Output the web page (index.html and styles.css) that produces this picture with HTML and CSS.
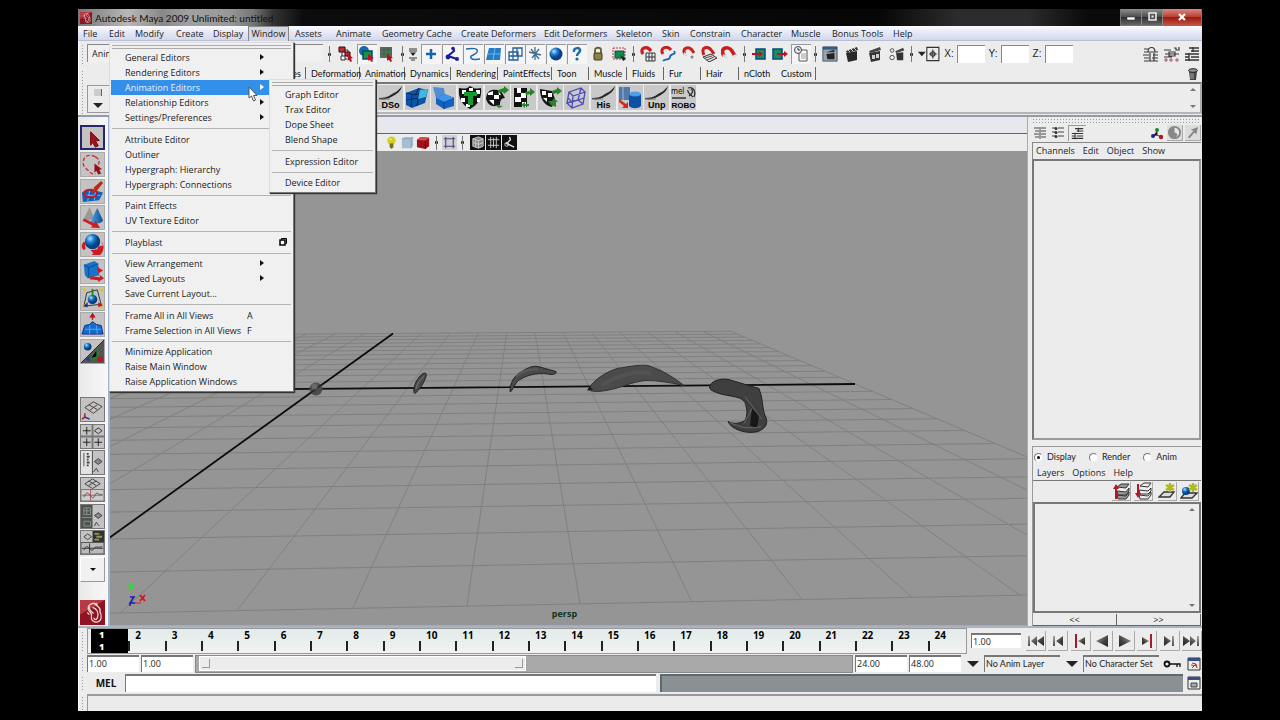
FILE: index.html
```html
<!DOCTYPE html>
<html lang="en">
<head>
<meta charset="utf-8">
<title>Autodesk Maya 2009 Unlimited: untitled</title>
<link rel="stylesheet" href="styles.css">
</head>
<body>
<svg class="defs" aria-hidden="true">
  <defs>
    <linearGradient id="metal" x1="0" y1="0" x2="1" y2="1"><stop offset="0" stop-color="#aaa"/><stop offset=".6" stop-color="#444"/><stop offset="1" stop-color="#222"/></linearGradient>
    <radialGradient id="ball" cx=".35" cy=".3"><stop offset="0" stop-color="#b5e2ff"/><stop offset=".5" stop-color="#1c7fd6"/><stop offset="1" stop-color="#073f80"/></radialGradient>
    <linearGradient id="cone" x1="0" y1="0" x2="1" y2="0"><stop offset="0" stop-color="#4da3e8"/><stop offset="1" stop-color="#0b4a92"/></linearGradient>
  </defs>
  <symbol id="hier" viewBox="0 0 16 16"><path d="M4 5v8h5M7 4h3v7" fill="none" stroke="#333"/><path d="M1 1h6v5H1zM7 6h5v4H7z" fill="#b9303a" stroke="#401"/><path d="M3 10h4v4H3z" fill="#fff" stroke="#333"/><path d="M10 8l5 4-2 .5 1 3-2 .3-1-2-1.500 1z" fill="#b01020"/></symbol>
  <symbol id="obj" viewBox="0 0 16 16"><circle cx="5" cy="5" r="5" fill="#1668a8"/><path d="M4 5h9v8H4z" fill="#159447" stroke="#044a70" stroke-width="1.500"/><path d="M9 8l6 4-2 .5 1 3-2 .3-1-2-2 1z" fill="#c01020"/></symbol>
  <symbol id="comp" viewBox="0 0 16 16"><path d="M1 1h12v11H1z" fill="#666"/><path d="M1 4h12M1 8h12M5 1v11M9 1v11" stroke="#24703c"/><path d="M8 8l6 4-2 .5 1 3-2 .3-1-2-2 1z" fill="#b01020"/></symbol>
  <symbol id="mask" viewBox="0 0 10 16"><path d="M1 3h8M1 5h8M1 12h8M3 14h4" stroke="#333"/><path d="M2 6.500h6L5 10z" fill="#222"/></symbol>
  <symbol id="plus" viewBox="0 0 16 16"><path d="M8 3v10M3 8h10" stroke="#1464a8" stroke-width="2.500"/></symbol>
  <symbol id="joint" viewBox="0 0 16 16"><path d="M9 2l1 3-6 5 9 3" fill="none" stroke="#1d1d9c" stroke-width="2.200"/><circle cx="9" cy="2.500" r="1.800" fill="#1d1d9c"/><circle cx="4" cy="11" r="2.400" fill="#1d1d9c"/><circle cx="13" cy="13" r="2" fill="#1d1d9c"/></symbol>
  <symbol id="curve" viewBox="0 0 16 16"><path d="M1 3c6-1 13-1 11 3S4 9 6 12s6 1 9 1" fill="none" stroke="#2269a8" stroke-width="1.500"/></symbol>
  <symbol id="plane" viewBox="0 0 16 16"><path d="M3 2h12l-1 12H0z" fill="#237cc4"/><path d="M9 2L7 14M2 8h12" stroke="#70b8ef"/></symbol>
  <symbol id="latt" viewBox="0 0 16 16"><path d="M2 6h9v8H2zM6 2h9v8H6zM2 10h9M6 6v8M10 2v8" fill="none" stroke="#245f99" stroke-width="1.300"/></symbol>
  <symbol id="burst" viewBox="0 0 16 16"><path d="M2 6l12 3M8 1v13M4 3l8 10M12 3L5 12" stroke="#456d92" stroke-width="1.300"/></symbol>
  <symbol id="ballic" viewBox="0 0 16 16"><circle cx="8" cy="8" r="6.500" fill="url(#ball)"/></symbol>
  <symbol id="ques" viewBox="0 0 16 16"><path d="M5 6c-1-5 7-5 6-1-.5 2-3 2-3 5" fill="none" stroke="#1b6ba6" stroke-width="2.500"/><circle cx="8" cy="13" r="1.600" fill="#1b6ba6"/></symbol>
  <symbol id="lock" viewBox="0 0 16 16"><path d="M5 8V4c0-3 6-3 6 0v4" fill="none" stroke="#665f30" stroke-width="1.800"/><rect x="4" y="7" width="8" height="7" rx="1" fill="#8c8142" stroke="#3c3818"/></symbol>
  <symbol id="hili" viewBox="0 0 16 16"><path d="M2 2h12v11H2z" fill="none" stroke="#c33" stroke-dasharray="2 1"/><path d="M4 5h9v7H4z" fill="#178b45" stroke="#055"/><path d="M9 9l6 4-3 2z" fill="#222"/></symbol>
  <symbol id="magnet" viewBox="0 0 16 16"><path d="M3 10C-2 2 7-1 11 5l3 5" fill="none" stroke="#c62020" stroke-width="3.600"/><path d="M2 9l4 3M12 11l3-2" stroke="#ddd" stroke-width="2.400"/></symbol>
  <symbol id="maggrid" viewBox="0 0 16 16"><path d="M3 8C-1 2 7-1 11 5" fill="none" stroke="#c62020" stroke-width="3.200"/><path d="M6 7h9v8H6zM6 11h9M9 7v8M12 7v8" fill="#eee" stroke="#333"/></symbol>
  <symbol id="magcurve" viewBox="0 0 16 16"><path d="M3 8C-1 2 7-1 11 4" fill="none" stroke="#c62020" stroke-width="3"/><path d="M14 5c3 4-4 2-4 6s-5 1-7 4" fill="none" stroke="#1766ad" stroke-width="1.800"/></symbol>
  <symbol id="magpt" viewBox="0 0 16 16"><path d="M4 8C0 2 8 0 11 4l2 3" fill="none" stroke="#c62020" stroke-width="3"/><path d="M3 7l3 3" stroke="#ddd" stroke-width="2"/><circle cx="11" cy="11" r="1.500" fill="#789"/></symbol>
  <symbol id="magview" viewBox="0 0 16 16"><path d="M2 11l8-3 6 4-8 4z" fill="#ddd" stroke="#333"/><path d="M4 12l7-2M6 14l7-3" stroke="#555"/><path d="M3 9C-1 1 7-1 11 5l2 3" fill="none" stroke="#c62020" stroke-width="3"/></symbol>
  <symbol id="inc" viewBox="0 0 16 16"><path d="M5 3h9v10H5z" fill="#1b8d5c" stroke="#054a80" stroke-width="1.500"/><path d="M1 8h8" stroke="#c01020" stroke-width="2"/><path d="M8 5l4 3-4 3z" fill="#c01020"/></symbol>
  <symbol id="outc" viewBox="0 0 16 16"><path d="M1 3h9v10H1z" fill="#1b8d5c" stroke="#054a80" stroke-width="1.500"/><path d="M5 8h8" stroke="#c01020" stroke-width="2"/><path d="M12 5l4 3-4 3z" fill="#c01020"/></symbol>
  <symbol id="hist" viewBox="0 0 16 16"><path d="M6 4h8v11H6z" fill="#fff" stroke="#555"/><path d="M8 8h5M8 10h5M8 12h5" stroke="#999"/><circle cx="5" cy="4" r="3.500" fill="#eee" stroke="#345"/><path d="M5 2v2h2" fill="none" stroke="#234"/></symbol>
  <symbol id="clap" viewBox="0 0 16 16"><path d="M2 7l11-2v9l-9 2z" fill="#292929"/><path d="M2 5l11-4 1 3-11 3z" fill="#333"/><path d="M4 4l2 2M7 3l2 2M10 2l2 2" stroke="#ccc"/></symbol>
  <symbol id="clapwin" viewBox="0 0 18 18"><path d="M1 1h16v16H1z" fill="#9aa3ab" stroke="#39536e"/><path d="M1 1h16v3H1z" fill="#345a86"/><path d="M5 9l9-1v7H6z" fill="#222"/><path d="M5 7l9-3v3z" fill="#333"/></symbol>
  <symbol id="clapipr" viewBox="0 0 16 16"><path d="M2 7l11-2v9l-9 2z" fill="#333"/><path d="M2 5l11-4 1 3-11 3z" fill="#444"/><path d="M5 9h3v4H5zM9 8h3v4H9z" fill="#ccc"/></symbol>
  <symbol id="clapset" viewBox="0 0 18 16"><path d="M8 7l8-1v9H9z" fill="#333"/><path d="M7 5l9-4 1 3-9 3z" fill="#444"/><circle cx="3.500" cy="4" r="2" fill="#eee" stroke="#444"/><circle cx="3.500" cy="12" r="2.500" fill="#eee" stroke="#444"/></symbol>
  <symbol id="inpt" viewBox="0 0 20 16"><path d="M0 6h7l-3.500 4z" fill="#222"/><path d="M8 2h11v12H8zM13.500 4v8M10 8h7" fill="none" stroke="#333"/><circle cx="13.500" cy="8" r="2" fill="none" stroke="#333"/></symbol>
  <symbol id="cb1" viewBox="0 0 16 16"><path d="M1 3h5M1 6h14M0 9h6M10 9h5M1 12h5M9 12h6M1 15h14M5 6c0-6 7-6 7 0M7 7v8h4V7" fill="none" stroke="#383838" stroke-width="1.200"/></symbol>
  <symbol id="cb2" viewBox="0 0 16 16"><path d="M0 4h7M10 2h2v2h3V1M1 8h14M5 6h6v4H5zM0 11h8" fill="none" stroke="#383838" stroke-width="1.200"/><path d="M1 13h2v2H1zM6 13h2v2H6zM12 13h2v2h-2z" fill="none" stroke="#a56"/></symbol>
  <symbol id="cb3" viewBox="0 0 16 16"><path d="M5 2h10M7 5h8M1 8h14M1 11h4M7 11h8M1 14h14M9 1v5M5 7v8" fill="none" stroke="#333" stroke-width="1.300"/></symbol>
  <symbol id="cha" viewBox="0 0 14 14"><path d="M1 2h5M8 2h5M2 5h4M8 5h5M1 8h5M8 8h5M2 11h4M8 11h5M7 1v12" stroke="#444"/></symbol>
  <symbol id="chb" viewBox="0 0 14 14"><path d="M1 2h4M7 2h6M1 6h4M7 6h6M1 10h4M7 10h6" stroke="#444"/><circle cx="5" cy="2.500" r="1.500" fill="#333"/><circle cx="5" cy="6.500" r="1.500" fill="#333"/><circle cx="5" cy="10.500" r="1.500" fill="#333"/></symbol>
  <symbol id="trash" viewBox="0 0 14 14"><path d="M3 4h8l-1 9H4z" fill="#444"/><ellipse cx="7" cy="3.500" rx="4.500" ry="1.800" fill="#999" stroke="#222"/><path d="M5 6v6M7 6v6" stroke="#aaa"/></symbol>
  <symbol id="rgb" viewBox="0 0 14 14"><path d="M7 5v4l-4 1M7 9l4 2" stroke="#333"/><circle cx="7" cy="4" r="2" fill="#168b28"/><circle cx="3" cy="10" r="2" fill="#15219b"/><circle cx="11" cy="11" r="2.200" fill="#ba1022"/></symbol>
  <symbol id="half" viewBox="0 0 16 16"><circle cx="8" cy="8" r="6" fill="#e6e6e6" stroke="#888" stroke-width="2"/><path d="M8 2a6 6 0 0 0 0 12c4-3 4-5 0-6z" fill="#888"/></symbol>
  <symbol id="arrne" viewBox="0 0 16 16"><path d="M3 13l6-7-3-1 8-3-2 8-2-2-5 6z" fill="#888"/></symbol>
  <symbol id="arrow" viewBox="0 0 24 24"><path d="M9 5l9 9-4 .5 3 5-3 1.500-3-5-2 3z" fill="#9c1420" stroke="#700"/></symbol>
  <symbol id="lasso" viewBox="0 0 24 24"><path d="M15 4c-12-6-16 7-10 12s5 6 10 6M15 4c5 3 4 5 3 9" fill="none" stroke="#c23b4a" stroke-width="1.500" stroke-dasharray="4 2"/><path d="M14 11l8 6-3 .5 2 4-3 1-2-4-2 2z" fill="#92101c"/></symbol>
  <symbol id="paint" viewBox="0 0 24 24"><path d="M1 13l9-3 13 3-4 8-17 2z" fill="#135fbb"/><path d="M3 16h17M9 11l-2 11M15 12l-1 9" stroke="#6cb8ff"/><ellipse cx="10" cy="14" rx="7" ry="4" fill="none" stroke="#c01824" stroke-width="2"/><path d="M10 14l2-5 4 3zM13 8l8-7 2 2-7 9z" fill="#b72e16"/></symbol>
  <symbol id="move" viewBox="0 0 24 24"><path d="M1 17L9 1l5 12z" fill="#999"/><path d="M10 16L17 2l6 13c-2 4-10 4-13 1z" fill="url(#cone)"/><path d="M3 13l11 5 1-3 5 8-10-.5 2-2-10-5z" fill="#ce1d22"/></symbol>
  <symbol id="rotate" viewBox="0 0 24 24"><circle cx="12" cy="9" r="8" fill="url(#ball)"/><path d="M3 9c-3 3-3 6 0 9l2-2c-1-2-1-4 1-5zM10 18l7-1 1-3 5-1c-1-2-1-4-2-5 4 5 3 11-1 15H11l2-2z" fill="#cc1b25"/></symbol>
  <symbol id="scale" viewBox="0 0 24 24"><path d="M3 5l11-4 4 3 1 12-12 3-3-3z" fill="#1574c9"/><path d="M3 5l5 3 10-4M8 8v11" fill="none" stroke="#0b4c91"/><path d="M17 7l6 4-5 3zM10 17l10 1-1-3 5 4-6 4v-2l-9-1z" fill="#cc1b25"/></symbol>
  <symbol id="univ" viewBox="0 0 24 24"><path d="M3 20L6 6l11-3 4 15z" fill="none" stroke="#333"/><path d="M2 2l3 2M20 2l3 2M2 21l3-2M20 21l3-1" stroke="#dbc923" stroke-width="3"/><circle cx="12" cy="13" r="5" fill="url(#ball)"/><path d="M12 2v8" stroke="#198a2d" stroke-width="2"/><path d="M18 16l5 3-5 2z" fill="#c01824"/><path d="M7 16l-5 4 5 1z" fill="#1c2aa0"/></symbol>
  <symbol id="soft" viewBox="0 0 24 24"><path d="M1 22l3-9 5-1 3-3 4 3 5 1 2 9z" fill="#146ccb" stroke="#0b2e93"/><path d="M4 17h17M9 13v9M16 13l1 9" stroke="#54a9f6"/><path d="M12 7V3M10 4l2-3 2 3z" stroke="#b01822" fill="#b01822" stroke-width="1.500"/></symbol>
  <symbol id="manip" viewBox="0 0 24 24"><path d="M0 24L24 0v24z" fill="#555"/><circle cx="7" cy="7" r="4" fill="url(#ball)"/><path d="M0 24L24 0" stroke="#222"/><path d="M17 10v8l-7 2M17 18l5 2" stroke="#198a2d" stroke-width="2"/><circle cx="20" cy="20" r="3" fill="#b01822"/><path d="M9 17v6l-4-3z" fill="#1b37aa"/></symbol>
  <symbol id="persp" viewBox="0 0 24 24"><path d="M4 10l9-6 9 5-9 7zM8 7l9 5M17 7l-8 6" fill="#c6c3be" stroke="#444"/><path d="M4 16v4l-3 2" stroke="#a22" fill="none" stroke-width="1.500"/><path d="M4 20l5 2" stroke="#22a" stroke-width="1.500"/></symbol>
  <symbol id="four" viewBox="0 0 24 24"><path d="M12 0v24M0 12h24" stroke="#777" stroke-width="2"/><path d="M2 6h8M6 2v8M2 18h8M6 14v8M14 18h8M18 14v8" stroke="#222"/><path d="M14 6l4-3 4 3-4 3z" fill="none" stroke="#333"/></symbol>
  <symbol id="outl" viewBox="0 0 24 24"><path d="M0 0h11v24H0z" fill="#e3e3e3"/><path d="M3 2v14" stroke="#555"/><path d="M6 3h2M6 6h3M6 9h2M6 12h3M6 15h2" stroke="#444" stroke-width="2"/><path d="M12 0v24" stroke="#555"/><path d="M14 11l4-3 4 3-4 3z" fill="#888" stroke="#444"/><path d="M13 22l3-4 2 4" stroke="#444" fill="none"/></symbol>
  <symbol id="pgraph" viewBox="0 0 24 24"><path d="M4 6l8-5 8 5-8 5zM8 3l8 5M16 3L8 8" fill="none" stroke="#444"/><path d="M0 12h24v12H0z" fill="#ccc" stroke="#777"/><path d="M1 18h22M10 12v12" stroke="#b55"/><path d="M3 20c5-12 8 6 11-1s4 0 8-2" fill="none" stroke="#456"/></symbol>
  <symbol id="hyper" viewBox="0 0 24 24"><path d="M0 0h12v24H0z" fill="#4c5450"/><path d="M3 3h7v7H3zM3 6h7M6 3v7M1 13h10M3 17h7v5H3z" fill="none" stroke="#899489"/><path d="M14 11l4-3 4 3-4 3z" fill="#888" stroke="#444"/><path d="M14 22l2-4 3 4" stroke="#444" fill="none"/></symbol>
  <symbol id="phg" viewBox="0 0 24 24"><path d="M12 0h12v12H12z" fill="#333"/><path d="M14 3h5M16 6h6M14 9h5" stroke="#9a9452" stroke-width="2"/><path d="M3 6l4-3 4 3-4 3z" fill="none" stroke="#444"/><path d="M0 12h24v12H0z" fill="#bbb" stroke="#555"/><path d="M1 18h22M3 20c4-10 7 4 10-1s5 0 9-3M9 13v10" fill="none" stroke="#333"/></symbol>
  <symbol id="maya" viewBox="0 0 24 24"><path d="M0 0h24v24H0z" fill="#8d1420"/><path d="M0 0h24L0 14z" fill="#b73b45"/><path d="M17 4c-6-2-10 1-9 5 1 3 4 3 3 7-1 3 2 6 6 5s4-6 2-11M12 7c4 1 6 5 5 9s-3 3-4 1M9 6c-1 3 2 5 4 7M7 12l2 2M14 4c4 2 6 5 5 8" fill="none" stroke="#ecd9da" stroke-width="1.200"/></symbol>
  <symbol id="brush" viewBox="0 0 25 25"><path d="M1 13c5 0 9-1 13-4 4-2 6-3 10-8-1 5-5 8-9 10-5 3-9 4-14 3z" fill="#282828"/><path d="M1 14h11" stroke="#777"/></symbol>
  <symbol id="sh1" viewBox="0 0 25 25"><path d="M1 8l13-5 9 2-3 13-13 5-6-3z" fill="#0a55aa"/><path d="M1 8l9 2 4-7M10 10l13-5M7 9L6 22M14 9l-2 12M1 15l19-3" fill="none" stroke="#0a2857"/><path d="M15 5l8-1-2 8-8 2z" fill="#41b7e2"/></symbol>
  <symbol id="sh2" viewBox="0 0 25 25"><path d="M2 2l11 1 1 8-9 2z" fill="#4e8fd4"/><path d="M5 13l9-4 9 4v8l-10 3-8-5z" fill="#1362c2"/><path d="M5 13l8 4 10-4M13 17v7" fill="none" stroke="#083b88"/><path d="M5 13l9-4 9 4-10 4z" fill="#3e95ea"/></symbol>
  <symbol id="sh3" viewBox="0 0 25 25"><path d="M1 3c7 1 7 1 11-2 5 3 5 3 11 2 1 10-3 17-11 21C4 20 0 13 1 3z" fill="#111"/><path d="M4 5h4v4H4zM11 3h4v3h-4zM18 5h4v4h-4zM3 13h4v4H3zM19 13h3v4h-3zM8 19h4v3H8z" fill="#fff"/><path d="M6 7h13v4h-4v9h-5v-9H6z" fill="#169b32"/></symbol>
  <symbol id="sh4" viewBox="0 0 25 25"><path d="M1 14C2 3 9 4 16 6l4 7c-4 0-5 3-5 7-8 3-12 0-14-6z" fill="#151515"/><path d="M3 8l5-2v4H3zM9 10h5v4H9zM4 15h5v5zM13 5l3 5h-2z" fill="#fff"/><path d="M13 5l6-2V1l5 4-5 4-1-2-5 1zM10 20l8 1-4 2" fill="#268629"/></symbol>
  <symbol id="sh5" viewBox="0 0 25 25"><path d="M3 3h13v19H3z" fill="#111"/><path d="M6 3h4v5H6zM10 8h5v5h-5zM4 12h6v5H4zM11 17h4v5h-4z" fill="#fff"/><path d="M14 7l5-1V3l5 4-5 4V9l-4 1zM10 20l4-3v2h4v2h-4v2z" fill="#268629"/></symbol>
  <symbol id="sh6" viewBox="0 0 25 25"><path d="M2 4l12 2 3 8-3 8C6 21 2 13 2 4z" fill="#151515"/><path d="M4 6h4v4H4zM10 8h4v4h-4zM5 13h4v4zM11 16h3v3z" fill="#fff"/><path d="M14 6l5-2V2l5 4-5 4V8l-4 1zM16 13l4 4h-2v5l-5-2-3-4h4z" fill="#268629"/></symbol>
  <symbol id="cage" viewBox="0 0 25 25"><path d="M5 7l12-4 4 4-2 12-11 4-5-5zM5 7l4 4 12-4M9 11l-1 12M5 7l-2 11 11-3 5 4M17 3l-3 12M4 13l4 4 12-4" fill="none" stroke="#4a4ab8" stroke-width="1.300"/></symbol>
  <symbol id="cyl" viewBox="0 0 25 25"><path d="M1 2h11v13H1z" fill="#507ba8"/><path d="M5 2v13" stroke="#97bde0"/><path d="M11 9h12v12c-3 3-9 3-12 0z" fill="#0f4fa5"/><ellipse cx="17" cy="9" rx="6" ry="2.500" fill="#4d9ee5"/><path d="M1 14l7 5 2-2v6H4l2-2-5-4z" fill="#d5281d"/></symbol>
  <symbol id="face" viewBox="0 0 25 25"><path d="M17 3c6-2 8 4 6 9M17 5c-1 3 3 5 5 7M20 4c3 2 1 5-2 7M1 13h14" fill="none" stroke="#333" stroke-width="1.300"/></symbol>
  <symbol id="bulb" viewBox="0 0 16 16"><circle cx="8" cy="6" r="4.500" fill="#d0cf28"/><path d="M6 9h4v4l-2 2-2-2z" fill="#73711c"/><path d="M6 4l2 1" stroke="#fff"/></symbol>
  <symbol id="cubeb" viewBox="0 0 16 16"><path d="M2 4l3-2h9v9l-2 3H2z" fill="#a4bfd1"/><path d="M2 4h10v10M12 4l2-2" fill="none" stroke="#84a3ba"/></symbol>
  <symbol id="cuber" viewBox="0 0 16 16"><path d="M1 5l4-3 9 1v9l-4 3-9-2z" fill="#a01218"/><path d="M1 5l9 1 4-3-9-1z" fill="#d84b4b"/><path d="M10 6v9" stroke="#600"/></symbol>
  <symbol id="cageb" viewBox="0 0 16 16"><path d="M4 4h8v8H4zM2 4h12M4 2v12M12 2v12M2 12h12" fill="none" stroke="#44468c" stroke-width="1.200"/></symbol>
  <symbol id="bk1" viewBox="0 0 16 16"><path d="M0 0h16v16H0z" fill="#111"/><path d="M3 4l6-2 5 2v8l-5 2-6-2z" fill="#888"/><path d="M3 4l6-2 5 2v8l-5 2-6-2zM3 4l6 2 5-2M9 6v8M3 8l6 2 5-2M6 5v8" fill="none" stroke="#ccc"/></symbol>
  <symbol id="bk2" viewBox="0 0 16 16"><path d="M0 0h16v16H0z" fill="#111"/><path d="M2 5h12M2 11h12M5 2v12M11 2v12M8 3v10" fill="none" stroke="#ccc"/></symbol>
  <symbol id="bk3" viewBox="0 0 16 16"><path d="M0 0h16v16H0z" fill="#111"/><path d="M8 2l1 3-4 4 8 4" fill="none" stroke="#ddd" stroke-width="1.500"/><circle cx="5" cy="10" r="2" fill="none" stroke="#ddd"/></symbol>
  <symbol id="lay1" viewBox="0 0 18 18"><path d="M5 5l4-3h8l-3 4zM5 9l9 1 3-4v3l-3 4H6zM5 13l9 1 3-4v3l-3 4H6z" fill="#999" stroke="#333"/><path d="M3 17V7H1l3-5 3 5H5v10z" fill="#b61626"/></symbol>
  <symbol id="lay2" viewBox="0 0 18 18"><path d="M6 4l4-3h7l-3 4zM5 8l9 1 3-3v3l-3 3H6zM5 13l9 1 3-4v3l-3 4H6z" fill="#eee" stroke="#333"/><path d="M3 2v9H1l3 5 3-5H5V2z" fill="#b61626"/></symbol>
  <symbol id="lay3" viewBox="0 0 18 18"><path d="M1 15l5-5h10l-4 5z" fill="#ddd" stroke="#333" stroke-width="1.300"/><path d="M12 1v9M8 3l8 5M16 3L8 8" stroke="#b1b91c" stroke-width="2.500"/></symbol>
  <symbol id="lay4" viewBox="0 0 18 18"><path d="M1 16l4-5h12l-5 5z" fill="#ddd" stroke="#333" stroke-width="1.300"/><circle cx="6" cy="9" r="4" fill="url(#ball)"/><path d="M13 1v9M9 3l8 5M17 3L9 8" stroke="#b1b91c" stroke-width="2.500"/></symbol>
  <symbol id="pstart" viewBox="0 0 18 14"><path d="M1 2h2v10H1zM10 2v10L4 7zM17 2v10l-7-5z" fill="url(#metal)"/></symbol>
  <symbol id="pback" viewBox="0 0 18 14"><path d="M4 2h2v10H4zM14 2v10L7 7z" fill="url(#metal)"/></symbol>
  <symbol id="pkeyb" viewBox="0 0 18 14"><path d="M4 0h2v14H4z" fill="#a11c33"/><path d="M14 3v8L7 7z" fill="url(#metal)"/></symbol>
  <symbol id="prev" viewBox="0 0 18 14"><path d="M15 1v12L3 7z" fill="url(#metal)"/></symbol>
  <symbol id="uicorner" viewBox="0 0 14 14"><path d="M1 1h12v12H1z" fill="#eee" stroke="#333"/><path d="M1 1h12v3H1z" fill="#344f83"/><path d="M4 7h6v4H4z" fill="#aaa" stroke="#444"/></symbol>
  <symbol id="uired" viewBox="0 0 14 14"><path d="M1 1h12v12H1z" fill="#eee" stroke="#333"/><path d="M1 1h12v3H1z" fill="#344f83"/><path d="M5 6l4 1-4 4M9 7l1 4M4 8l6 1" fill="none" stroke="#b82d2d"/></symbol>
  <symbol id="key" viewBox="0 0 18 14"><circle cx="4" cy="7" r="2.500" fill="none" stroke="#111" stroke-width="1.800"/><path d="M6 7h11v3M14 7v3" fill="none" stroke="#111" stroke-width="1.300"/></symbol>
  <symbol id="down" viewBox="0 0 12 8"><path d="M0 1h12L6 7z" fill="#222"/></symbol>
</svg>

<div class="app">
  <header class="titlebar">
    <svg class="logo"><use href="#maya"/></svg>
    <h1 class="title">Autodesk Maya 2009 Unlimited: untitled</h1>
    <div class="winbtns">
      <button class="wb" aria-label="Minimize"><svg viewBox="0 0 12 12"><path d="M2 6h8v3H2z" fill="#fff" stroke="#333" stroke-width=".6"/></svg></button>
      <button class="wb" aria-label="Restore"><svg viewBox="0 0 12 12"><path d="M3 2h7v7H3z" fill="#555" stroke="#eee" stroke-width="1.500"/><path d="M5.500 4.500h2v2h-2z" fill="#eee"/></svg></button>
      <button class="wb close" aria-label="Close"><svg viewBox="0 0 12 12"><path d="M3 3l6 6M9 3L3 9" stroke="#fff" stroke-width="2.200"/></svg></button>
    </div>
  </header>

  <nav class="menubar" aria-label="Main">
    <button>File</button><button>Edit</button><button>Modify</button><button>Create</button><button>Display</button><button class="open">Window</button><button>Assets</button><button>Animate</button><button>Geometry Cache</button><button>Create Deformers</button><button>Edit Deformers</button><button>Skeleton</button><button>Skin</button><button>Constrain</button><button>Character</button><button>Muscle</button><button>Bonus Tools</button><button>Help</button>
  </nav>

  <div class="statusline">
    <i class="grip"></i>
    <select class="modesel" aria-label="Menu set"><option>Animation</option></select>
    <i class="sep"></i>
    <div class="grp"><svg><use href="#hier"/></svg><svg class="on"><use href="#obj"/></svg><svg><use href="#comp"/></svg></div>
    <i class="sep"></i>
    <div class="grp"><svg class="thin"><use href="#mask"/></svg></div>
    <div class="grp"><svg class="on"><use href="#plus"/></svg><svg class="on"><use href="#joint"/></svg><svg class="on"><use href="#curve"/></svg><svg class="on"><use href="#plane"/></svg><svg class="on"><use href="#latt"/></svg><svg class="on"><use href="#burst"/></svg><svg class="on"><use href="#ballic"/></svg><svg class="on"><use href="#ques"/></svg><svg><use href="#lock"/></svg><svg><use href="#hili"/></svg></div>
    <i class="sep"></i>
    <div class="grp"><svg><use href="#maggrid"/></svg><svg><use href="#magcurve"/></svg><svg><use href="#magpt"/></svg><svg><use href="#magview"/></svg><svg><use href="#magnet"/></svg></div>
    <i class="sep"></i>
    <div class="grp"><svg><use href="#inc"/></svg><svg><use href="#outc"/></svg><svg class="on"><use href="#hist"/></svg></div>
    <i class="sep"></i>
    <div class="grp"><svg><use href="#clapwin"/></svg><svg><use href="#clap"/></svg><svg><use href="#clapipr"/></svg><svg><use href="#clapset"/></svg></div>
    <i class="sep"></i>
    <div class="grp"><svg class="wide"><use href="#inpt"/></svg></div>
    <div class="xyz"><label for="fx">X:</label><input id="fx"><label for="fy">Y:</label><input id="fy"><label for="fz">Z:</label><input id="fz"></div>
    <div class="grp right"><svg><use href="#cb1"/></svg><svg><use href="#cb2"/></svg><svg><use href="#cb3"/></svg></div>
  </div>

  <div class="shelf">
    <i class="grip"></i>
    <div class="shelfmenu"><button aria-label="Shelf tabs"><i></i></button><button aria-label="Shelf menu"><svg><use href="#down"/></svg></button></div>
    <div class="shelfmain">
      <div class="tabs">
        <button class="first">Curves</button><button>Deformation</button><button>Animation</button><button>Dynamics</button><button>Rendering</button><button>PaintEffects</button><button>Toon</button><button>Muscle</button><button>Fluids</button><button>Fur</button><button>Hair</button><button class="nosep">nCloth</button><button class="sel">Custom</button>
        <svg class="trash"><use href="#trash"/></svg>
      </div>
      <div class="shelfbox">
        <div class="shelficons">
          <button><svg><use href="#brush"/></svg><b>DSo</b></button>
          <button aria-label="Lattice"><svg><use href="#sh1"/></svg></button>
          <button aria-label="Extrude"><svg><use href="#sh2"/></svg></button>
          <button aria-label="Texture"><svg><use href="#sh3"/></svg></button>
          <button aria-label="Unfold"><svg><use href="#sh4"/></svg></button>
          <button aria-label="Layout"><svg><use href="#sh5"/></svg></button>
          <button aria-label="Relax"><svg><use href="#sh6"/></svg></button>
          <button aria-label="Cage"><svg><use href="#cage"/></svg></button>
          <button><svg><use href="#brush"/></svg><b>His</b></button>
          <button aria-label="Combine"><svg><use href="#cyl"/></svg></button>
          <button><svg><use href="#brush"/></svg><b>Unp</b></button>
          <button class="mel"><svg><use href="#face"/></svg><em>mel</em><b>ROBO</b></button>
        </div>
        <div class="scroller"><i class="up"></i><i class="dn"></i></div>
      </div>
    </div>
  </div>

  <main class="work">
    <aside class="toolbox">
      <div class="tools">
        <button class="active" aria-label="Select"><svg><use href="#arrow"/></svg></button><button aria-label="Lasso"><svg><use href="#lasso"/></svg></button><button aria-label="Paint select"><svg><use href="#paint"/></svg></button><button aria-label="Move"><svg><use href="#move"/></svg></button><button aria-label="Rotate"><svg><use href="#rotate"/></svg></button><button aria-label="Scale"><svg><use href="#scale"/></svg></button><button aria-label="Universal"><svg><use href="#univ"/></svg></button><button aria-label="Soft modification"><svg><use href="#soft"/></svg></button><button aria-label="Show manipulator"><svg><use href="#manip"/></svg></button>
      </div>
      <div class="layouts">
        <button aria-label="Single view"><svg><use href="#persp"/></svg></button><button aria-label="Four view"><svg><use href="#four"/></svg></button><button aria-label="Outliner view"><svg><use href="#outl"/></svg></button><button aria-label="Graph view"><svg><use href="#pgraph"/></svg></button><button aria-label="Hypershade view"><svg><use href="#hyper"/></svg></button><button aria-label="Hypergraph view"><svg><use href="#phg"/></svg></button><button class="more" aria-label="More layouts"><i></i></button>
      </div>
      <svg class="mayalogo"><use href="#maya"/></svg>
    </aside>

    <section class="panel">
      <div class="panelmenu"></div>
      <div class="paneltools"><svg><use href="#bulb"/></svg><svg><use href="#cubeb"/></svg><svg><use href="#cuber"/></svg><i class="sep"></i><svg class="lit"><use href="#cageb"/></svg><i class="sep"></i><svg><use href="#bk1"/></svg><svg><use href="#bk2"/></svg><svg><use href="#bk3"/></svg></div>
      <div class="view">
        <svg class="scene" viewBox="110 151 917 475" preserveAspectRatio="xMidYMid slice">
          <g id="grid" stroke="#808080" stroke-width="1"></g>
          <g stroke="#0c0c0c" stroke-width="1.800"><path d="M60 391.500L855 384.500M393 334L105 541.500"/></g>
          <circle cx="316" cy="389.500" r="6.500" fill="#4c4c4c"/><path d="M310 394l13-10" stroke="#222" stroke-width="1.500"/><circle cx="314.500" cy="387" r="3" fill="#686868"/>
          <path d="M414 393c-1-6 3-15 9-19 3-1 4 0 3 3-2 6-6 13-11 17z" fill="#4b4b4b" stroke="#222"/><path d="M416 389c1-5 4-9 8-12" stroke="#777" fill="none"/>
          <path d="M510 392c0-9 4-16 12-20 6-4 11-6 16-5l18 5c1 2-2 3-5 3-10-2-21-1-31 5-4 2-6 8-9 12z" fill="#4a4a4a" stroke="#252525"/><path d="M516 377c7-6 15-8 22-7" fill="none" stroke="#5c5c5c" stroke-width="2"/>
          <path d="M588 390c6-10 17-17 29-21 12-2 23-4 31-3 15 5 26 12 36 20-13-3-27-5-38-5-14 1-26 8-40 10-7 1-12 2-18-1z" fill="#4b4b4b" stroke="#333"/><path d="M602 386c14-10 33-15 49-12" fill="none" stroke="#535353" stroke-width="4"/><path d="M587 391l3-4 3 3z" fill="#1b1b1b"/>
          <path d="M710 386c3-6 14-8 22-5l27 8c4 9 3 19 6 27 4 7 1 13-7 16-11 3-27-2-30-10 6 3 12 2 17-1 3-6 2-12 0-18-4-8-21-5-33-12-2-1-3-3-2-5z" fill="#3f3f3f" stroke="#222"/><path d="M741 397l18 19-2 13-7-3 2-17z" fill="#181818"/><path d="M745 397l17 23M752 409l-8 15M730 423c10 5 20 7 31 4" stroke="#666" fill="none"/>
        </svg>
        <svg class="triad" viewBox="0 0 24 26"><path d="M3 2l4 4M7 2L3 8" stroke="#36d636" stroke-width="2.500"/><path d="M4 15h4l-4 6h5M4 21v3" fill="none" stroke="#1a1ab0" stroke-width="1.500"/><path d="M9 21h6" stroke="#d22"/><path d="M14 13l5 6M19 13l-5 6" stroke="#d41414" stroke-width="1.800"/></svg>
        <span class="cam">persp</span>
      </div>
    </section>

    <aside class="side">
      <div class="dots"></div>
      <div class="chicons"><svg><use href="#cha"/></svg><svg><use href="#chb"/></svg><svg class="on"><use href="#cb3"/></svg><span class="grow"></span><svg><use href="#rgb"/></svg><svg class="raised"><use href="#half"/></svg><svg class="raised"><use href="#arrne"/></svg></div>
      <nav class="chmenu"><button>Channels</button><button>Edit</button><button>Object</button><button>Show</button></nav>
      <div class="chbox"></div>
      <div class="layerpane">
        <div class="radios"><label><input type="radio" name="lt" checked>Display</label><label><input type="radio" name="lt">Render</label><label><input type="radio" name="lt">Anim</label></div>
        <nav class="laymenu"><button>Layers</button><button>Options</button><button>Help</button></nav>
        <div class="layicons"><button aria-label="Move layer up"><svg><use href="#lay1"/></svg></button><button aria-label="Move layer down"><svg><use href="#lay2"/></svg></button><button aria-label="New layer"><svg><use href="#lay3"/></svg></button><button aria-label="New layer from selection"><svg><use href="#lay4"/></svg></button></div>
        <div class="laybox"><div class="scroller"><i class="up"></i><i class="dn"></i></div></div>
        <div class="pager"><button>&lt;&lt;</button><button>&gt;&gt;</button></div>
      </div>
    </aside>
  </main>

  <footer class="bottom">
    <div class="timerow">
      <i class="grip"></i>
      <ol class="timeline"><li class="cur"><b>1</b><b>1</b></li><li>2</li><li>3</li><li>4</li><li>5</li><li>6</li><li>7</li><li>8</li><li>9</li><li>10</li><li>11</li><li>12</li><li>13</li><li>14</li><li>15</li><li>16</li><li>17</li><li>18</li><li>19</li><li>20</li><li>21</li><li>22</li><li>23</li><li>24</li></ol>
      <input class="curtime" aria-label="Current time" value="1.00">
      <div class="play"><button aria-label="Go to start"><svg><use href="#pstart"/></svg></button><button aria-label="Step back"><svg><use href="#pback"/></svg></button><button aria-label="Previous key"><svg><use href="#pkeyb"/></svg></button><button aria-label="Play backwards"><svg><use href="#prev"/></svg></button><button aria-label="Play forwards"><svg class="flip"><use href="#prev"/></svg></button><button aria-label="Next key"><svg class="flip"><use href="#pkeyb"/></svg></button><button aria-label="Step forward"><svg class="flip"><use href="#pback"/></svg></button><button aria-label="Go to end"><svg class="flip"><use href="#pstart"/></svg></button></div>
    </div>
    <div class="rangerow">
      <i class="grip"></i>
      <input aria-label="Start" value="1.00"><input aria-label="Playback start" value="1.00">
      <div class="range"><div class="thumb"><i></i><i></i></div></div>
      <input aria-label="Playback end" value="24.00"><input aria-label="End" value="48.00">
      <svg class="dd"><use href="#down"/></svg><select aria-label="Anim layer"><option>No Anim Layer</option></select>
      <svg class="dd"><use href="#down"/></svg><select aria-label="Character set"><option>No Character Set</option></select>
      <button class="keybtn" aria-label="Auto key"><svg><use href="#key"/></svg></button><button class="prefbtn" aria-label="Preferences"><svg><use href="#uired"/></svg></button>
    </div>
    <div class="melrow">
      <i class="grip"></i><label for="mel">MEL</label><input id="mel"><output></output><button class="prefbtn" aria-label="Script editor"><svg><use href="#uicorner"/></svg></button>
    </div>
    <div class="helprow"><i class="grip"></i><div></div></div>
  </footer>

  <div class="menu winmenu" role="menu">
    <div class="tear"></div>
    <button class="sub">General Editors</button><button class="sub">Rendering Editors</button>
    <div class="subwrap"><button class="sub hot">Animation Editors</button>
      <div class="menu submenu" role="menu">
        <div class="tear"></div>
        <button>Graph Editor</button><button>Trax Editor</button><button>Dope Sheet</button><button>Blend Shape</button><hr><button>Expression Editor</button><hr><button>Device Editor</button>
      </div>
      <svg class="cursor" viewBox="0 0 10 16"><path d="M1 1v11l2.500-2 2 5 2-1-2-4.500H9z" fill="#fff" stroke="#555"/></svg>
    </div>
    <button class="sub">Relationship Editors</button><button class="sub">Settings/Preferences</button>
    <hr>
    <button>Attribute Editor</button><button>Outliner</button><button>Hypergraph: Hierarchy</button><button>Hypergraph: Connections</button>
    <hr>
    <button>Paint Effects</button><button>UV Texture Editor</button>
    <hr>
    <button class="opt">Playblast<svg viewBox="0 0 8 8"><path d="M2.500 1.500v-1h5v5h-1" fill="none" stroke="#000"/><path d="M1 2h5v5H1z" fill="#fff" stroke="#000" stroke-width="1.500"/></svg></button>
    <hr>
    <button class="sub">View Arrangement</button><button class="sub">Saved Layouts</button><button>Save Current Layout...</button>
    <hr>
    <button>Frame All in All Views<kbd>A</kbd></button><button>Frame Selection in All Views<kbd>F</kbd></button>
    <hr>
    <button>Minimize Application</button><button>Raise Main Window</button><button>Raise Application Windows</button>
  </div>
</div>
<script src="grid.js"></script>
</body>
</html>
```
FILE: grid.js
```js
// Ground plane of the perspective view: 12 units to each side of the origin.
(function () {
  var g = document.getElementById('grid');
  function project(x, z) {
    var w = 1 + 0.0022 * x - 0.0505 * z;
    return [(316 + 46.8 * x - 26.26 * z) / w, (389.5 + 0.429 * x - 12.24 * z) / w];
  }
  function line(a, b) {
    var l = document.createElementNS('http://www.w3.org/2000/svg', 'line');
    l.setAttribute('x1', a[0].toFixed(1));
    l.setAttribute('y1', a[1].toFixed(1));
    l.setAttribute('x2', b[0].toFixed(1));
    l.setAttribute('y2', b[1].toFixed(1));
    g.appendChild(l);
  }
  for (var i = -12; i <= 12; i++) {
    line(project(i, -12), project(i, 12));
    line(project(-12, i), project(12, i));
  }
})();
```
FILE: styles.css
```css
* { box-sizing: border-box; }
body {
  margin: 0;
  min-height: 100vh;
  padding: 9px 78px;
  background: #000;
  color: #1c1c1c;
  font: 9px/14px "Open Sans", "Noto Sans", sans-serif;
  display: flex;
}
.defs { position: absolute; width: 0; height: 0; }
button, input, select { font: inherit; color: inherit; margin: 0; padding: 0; border: 0; background: none; border-radius: 0; }
button { display: block; text-align: left; white-space: nowrap; }
svg { display: block; flex: none; }
.app { position: relative; flex: 1; min-width: 0; display: flex; flex-direction: column; background: #ececec; }

.titlebar { height: 17px; display: flex; align-items: center; background: linear-gradient(90deg, #777 0, #b8b8b8 50px, #888 85px, #a0a0a0 110px, #999 150px, #777 175px, #333 195px, #0c0c0e 225px, #060607 800px, #2c2c2e 880px, #2c2c2e 950px, #0a0a0a 1010px); }
.logo { width: 12px; height: 12px; margin-left: 2px; }
.title { margin: 0 0 0 3px; font: 10px/14px Lato, "Open Sans", sans-serif; color: #111; flex: 1; white-space: nowrap; }
.winbtns { display: flex; align-self: stretch; border: 1px solid #777; border-top: 0; }
.wb { width: 21px; display: grid; place-items: center; background: linear-gradient(#8f8f8f, #4a4a4a 50%, #2d2d2d 50%, #666); border-right: 1px solid #888; }
.wb svg { width: 12px; height: 12px; }
.wb.close { width: 38px; border: 0; background: linear-gradient(#d98a80, #bb3d30 50%, #98190f 50%, #c0503f); }

.menubar { height: 15px; display: grid; grid-template-columns: 26px 26px 41px 37px 38px 44px 41px 46px 79px 83px 72px 46px 28px 51px 50px 41px 61px 40px; background: linear-gradient(#fbfcfe, #e0e4f3 60%, #d3d9ed); border-bottom: 1px solid #b9bfd2; }
.menubar button { padding-left: 5px; line-height: 14px; }
.menubar .open { border: 1px solid #888; border-bottom: 0; background: #d5d8e4; padding-left: 3px; width: 41px; height: 15px; justify-self: center; }

.grip { width: 9px; flex: none; align-self: stretch; border-left: 1px solid #fff; background: radial-gradient(circle, #999 30%, transparent 35%) 2px 0 / 3px 3px; background-clip: content-box; padding: 2px 4px 1px 2px; }
.statusline { height: 26px; display: grid; align-items: center; grid-template-columns: 9px 236px 13px 61px 10px 14px 208px 9px 101px 10px 62px 9px 87px 9px 25px 133px 1fr; }
.modesel { appearance: none; height: 18px; background: #f0f0f0; border: 1px solid #888; border-width: 1px 0 0 1px; padding-left: 4px; align-self: start; margin-top: 3px; }
.sep { justify-self: center; width: 3px; height: 16px; background: linear-gradient(90deg, transparent 1px, #777 1px, #777 2px, transparent 2px), radial-gradient(ellipse, #222 50%, transparent 55%) center / 3px 7px no-repeat; }
.grp { display: flex; justify-content: space-between; align-items: center; }
.grp svg { width: 20px; height: 20px; padding: 2px; border: 0 solid #999; }
.grp .on { background: #f5f5f5; border-width: 1px 0 0 1px; padding: 1px 2px 2px 1px; }
.grp .thin { width: 12px; height: 16px; padding: 0; }
.grp .wide { width: 24px; height: 20px; padding: 1px; margin: 0 0 0 auto; }
.xyz { display: flex; align-items: center; }
.xyz label { width: 16px; text-align: center; font: 10px/14px "Liberation Sans", sans-serif; }
.xyz input { width: 28px; height: 18px; background: #fff; border: 1px solid #888; border-width: 1px 0 0 1px; }
.grp.right { justify-self: end; width: 61px; }

.shelf { height: 50px; display: flex; border-bottom: 2px solid #929ba8; }
.shelfmenu { width: 22px; align-self: end; margin-bottom: 2px; border: 1px solid #999; border-right: 0; }
.shelfmenu button { width: 20px; height: 13px; display: grid; place-items: center; }
.shelfmenu button i { width: 8px; height: 7px; background: #ccc; border-right: 1px solid #666; }
.shelfmenu svg { width: 10px; height: 7px; }
.shelfmain { flex: 1; min-width: 0; }
.tabs { height: 15px; display: grid; grid-template-columns: 197px 54px 45px 46px 47px 54px 37px 38px 37px 37px 38px 37px 40px 1fr; }
.tabs button { height: 13px; padding-left: 5px; border-right: 1px solid #666; font: 9px/14px Lato, sans-serif; color: #111; }
.tabs .first { text-align: right; padding-right: 4px; }
.tabs .nosep { border: 0; }
.tabs .sel { line-height: 11px; }
.trash { width: 14px; height: 14px; justify-self: end; margin-right: 2px; }
.shelfbox { height: 32px; border: 2px solid #888; border-color: #777 #aaa #b5b5b5 #888; display: flex; justify-content: space-between; }
.shelficons { width: 318px; margin: 1px 0 0 267px; display: flex; justify-content: space-between; }
.shelficons button { width: 25px; height: 25px; background: #c9c9c9; position: relative; }
.shelficons svg { width: 25px; height: 25px; }
.shelficons b { position: absolute; right: 0; bottom: 0; left: 0; text-align: center; font: bold 9px/9px "Liberation Sans", sans-serif; color: #000; }
.shelficons .mel b { font-size: 8px; }
.shelficons em { position: absolute; left: 0; top: 2px; font: 8px/9px "DejaVu Sans Condensed", sans-serif; color: #000; }
.scroller { width: 10px; margin: 4px 2px; display: flex; flex-direction: column; justify-content: space-between; align-items: center; }
.up, .dn { border: 3px solid transparent; }
.up { border-bottom-color: #777; border-top: 0; }
.dn { border-top-color: #777; border-bottom: 0; }

.work { flex: 1; display: flex; min-height: 0; }
.toolbox { width: 30px; padding: 8px 3px 1px 2px; display: flex; flex-direction: column; background: linear-gradient(90deg, #e9e9e9, #f8f8fa); }
.toolbox button { width: 25px; height: 25px; background: #c4c3c2; border: 1px solid #aaa; display: grid; place-items: center; }
.toolbox button svg { width: 23px; height: 23px; }
.tools { height: 239px; display: flex; flex-direction: column; justify-content: space-between; }
.tools .active { border: 2px solid #26266f; }
.layouts { height: 185px; margin-top: 33px; display: flex; flex-direction: column; justify-content: space-between; }
.layouts button { border-color: #777; }
.toolbox .more { background: #f1f1f1; border-color: #fff #999 #999 #fff; }
.more i { border: 3px solid transparent; border-top-color: #111; border-bottom: 0; }
.mayalogo { width: 25px; height: 25px; margin-top: auto; }

.panel { flex: 1; min-width: 0; display: flex; flex-direction: column; border: 2px solid #9fb4d0; border-width: 0 0 0 2px; }
.panelmenu { height: 17px; background: #e6e8ee; border-bottom: 1px solid #666; }
.paneltools { height: 17px; padding-left: 274px; display: flex; align-items: center; gap: 1px; }
.paneltools svg { width: 15px; height: 15px; }
.paneltools .lit { background: #d0d0d0; }
.paneltools .sep { margin: 0 3px; height: 14px; }
.paneltools .sep + .sep, .paneltools .lit + .sep { margin-right: 5px; }
.view { flex: 1; position: relative; overflow: hidden; background: #959595; border-bottom: 1px solid #aaa; }
.scene { position: absolute; inset: 0; width: 100%; height: 100%; }
.triad { position: absolute; left: 16px; bottom: 17px; width: 24px; height: 26px; }
.cam { position: absolute; left: 0; right: 8px; bottom: 4px; text-align: center; font: bold 9px/14px "Open Sans", sans-serif; color: #12331c; }

.side { width: 175px; flex: none; padding: 1px 1px 0 4px; border-left: 1px solid #aaa; display: flex; flex-direction: column; }
.dots { height: 5px; background: radial-gradient(circle, #999 30%, transparent 35%) 0 0 / 3px 3px; }
.chicons { height: 19px; display: flex; align-items: center; gap: 2px; }
.chicons svg { width: 16px; height: 16px; padding: 1px; }
.chicons .on { width: 18px; border: 1px solid #999; border-width: 1px 0 0 1px; }
.chicons .raised { background: #ddd; border: 1px solid #aaa; border-width: 0 1px 1px 0; padding: 0; }
.grow { flex: 1; }
.chmenu, .laymenu { display: flex; gap: 8px; height: 15px; padding-left: 4px; }
.chmenu { border: 1px solid #888; border-width: 1px 0 0 1px; height: 17px; padding-left: 3px; }
.chbox { flex: 1; border: 2px solid #888; border-color: #777 #999 #999 #777; }
.layerpane { margin-top: 6px; border: 1px solid #999; border-width: 1px 0 0 1px; padding-top: 2px; }
.radios { display: flex; gap: 13px; height: 16px; padding-left: 1px; font: 9px/14px Lato, sans-serif; }
.radios label { display: flex; align-items: center; gap: 4px; }
.radios input { appearance: none; width: 9px; height: 9px; border: 1px solid #777; border-color: #777 #eee #eee #777; border-radius: 50%; background: #fff; display: grid; place-items: center; }
.radios input:checked::after { content: ""; width: 3px; height: 3px; border-radius: 50%; background: #000; }
.layicons { height: 22px; border-top: 1px solid #777; display: flex; justify-content: flex-end; gap: 3px; padding: 1px 2px; }
.layicons button { width: 19px; height: 19px; border: 1px solid #aaa; border-width: 0 1px 1px 0; }
.layicons button:nth-child(2) { margin-right: 2px; }
.layicons svg { width: 18px; height: 18px; }
.laybox { height: 111px; border: 2px solid #777; display: flex; justify-content: flex-end; }
.pager { display: flex; height: 12px; margin-top: 1px; }
.pager button { flex: 1; text-align: center; line-height: 10px; border: 1px solid #666; border-width: 0 1px 1px 0; }

.bottom { border-top: 2px solid #a9b3c4; }
.timerow, .rangerow, .melrow, .helprow { display: flex; align-items: center; }
.timerow { height: 26px; }
.timeline { flex: 1; height: 26px; margin: 0; padding: 0 2px 0 3px; list-style: none; display: flex; background: linear-gradient(#e2ecea, #f2f2f2); border: 1px solid #999; font: bold 10px/12px "Open Sans", sans-serif; color: #000; }
.timeline li { flex: 1; padding-left: 7px; background: linear-gradient(#222, #222) 0 12px / 2px 10px no-repeat; }
.timeline .cur { background: #000; color: #fff; padding-left: 8px; }
.timeline b { display: block; font-size: 9px; line-height: 12px; }
.bottom input { background: #fff; border: 1px solid #777; border-width: 2px 0 0 1px; padding-left: 1px; font: 9px/12px "Open Sans", sans-serif; }
.curtime { width: 50px; height: 15px; margin: 0 5px 2px 4px; }
.play { display: flex; width: 176px; justify-content: space-between; }
.play button { width: 20px; height: 20px; display: grid; place-items: center; border: 1px solid #aaa; border-width: 0 1px 1px 0; }
.play svg { width: 18px; height: 14px; }
.flip { transform: scaleX(-1); }
.rangerow { height: 19px; gap: 2px; }
.rangerow > .grip { margin-right: -2px; }
.rangerow input { width: 52px; height: 17px; padding-bottom: 2px; }
.range { flex: 1; height: 18px; background: #a8a8a8; border: 1px solid #888; padding: 0 0 0 3px; }
.thumb { width: 50%; height: 15px; background: #ececec; border: 1px solid #fff; display: flex; justify-content: space-between; padding: 2px; }
.thumb i { width: 8px; height: 9px; border: 1px solid #999; border-width: 0 1px 1px 0; }
.dd { width: 12px; height: 8px; margin: 0 3px 0 4px; }
.rangerow select { appearance: none; width: 76px; height: 17px; border: 1px solid #777; border-width: 2px 0 0 1px; padding: 0 0 2px 1px; font: 9px/13px Lato, sans-serif; }
.keybtn { width: 22px; padding-left: 2px; }
.keybtn svg { width: 18px; height: 14px; }
.prefbtn { width: 17px; padding-left: 2px; }
.prefbtn svg { width: 14px; height: 14px; }
.melrow { height: 20px; }
.melrow label { width: 38px; text-align: center; font: bold 10px/14px "Open Sans", sans-serif; color: #111; }
.melrow input { flex: 532; min-width: 0; height: 18px; }
.melrow output { flex: 524; height: 18px; margin: 0 2px 0 4px; background: #899194; border: 2px solid #5f686c; border-width: 2px 0 0 2px; }
.helprow { height: 18px; }
.helprow div { flex: 1; height: 17px; border: 2px solid #999; border-width: 2px 0 0 1px; background: #ebebeb; }

.menu { position: absolute; background: #f0f0f0; border: 1px solid #aaa; border-color: #ddd #777 #777 #ddd; box-shadow: 1px 1px 1px #333; padding: 0 1px; }
.menu > button, .subwrap > button { width: 100%; height: 15px; line-height: 15px; padding-left: 14px; position: relative; }
.menu hr { height: 7px; margin: 0 1px; border: 0; background: linear-gradient(#b4b4b4, #b4b4b4) 0 3px / 100% 1px no-repeat; }
.menu hr:nth-of-type(even) { height: 6px; }
.tear { height: 4px; margin: 2px 1px 1px; border: 1px solid #aaa; border-width: 1px 0; }
.winmenu { left: 31px; top: 33px; width: 185px; height: 350px; }
.submenu { left: 158px; top: -1px; width: 107px; height: 114px; z-index: 1; }
.subwrap { position: relative; z-index: 1; }
.menu .sub::after { content: ""; position: absolute; left: 149px; top: 4px; border: 3px solid transparent; border-left: 4px solid #111; border-right: 0; }
.menu .hot { background: #3390ea; color: #e6f2ff; }
.menu .hot::after { border-left-color: #fff; }
.menu kbd { position: absolute; left: 136px; font: inherit; }
.opt svg { position: absolute; right: 5px; top: 3px; width: 8px; height: 8px; }
.cursor { position: absolute; left: 137px; top: 6px; width: 10px; height: 16px; }
```
